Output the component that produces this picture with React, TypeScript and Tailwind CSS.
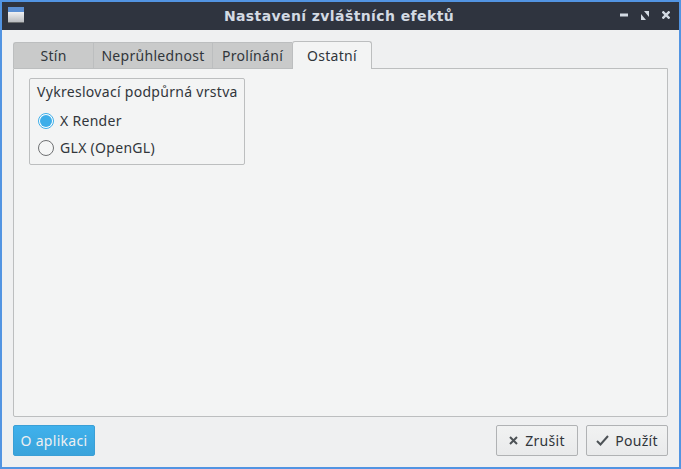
import React from "react";

const tabs = [
  { label: "Stín", width: "w-[80px]" },
  { label: "Neprůhlednost", width: "w-[119px]" },
  { label: "Prolínání", width: "w-[80px]" },
];

function WindowIcon() {
  return (
    <svg width="16" height="16" viewBox="0 0 16 16" className="-mt-[2px]">
      <defs>
        <linearGradient id="body" x1="0" y1="0" x2="0" y2="1">
          <stop offset="0" stopColor="#f0f1f3" />
          <stop offset="1" stopColor="#b9bcc0" />
        </linearGradient>
      </defs>
      <rect x="0" y="0" width="16" height="5" fill="#5b8fd3" />
      <rect x="0" y="5" width="16" height="10" fill="url(#body)" />
      <rect x="0" y="15" width="16" height="1" fill="#6b6e70" />
    </svg>
  );
}

function Radio({ checked, label }: { checked?: boolean; label: string }) {
  return (
    <div className="flex items-center h-[27px] pl-px">
      {checked ? (
        <span className="w-4 h-4 rounded-full border border-[#3daee9] bg-white flex items-center justify-center">
          <span className="w-3 h-3 rounded-full bg-[#3daee9]" />
        </span>
      ) : (
        <span className="w-4 h-4 rounded-full border border-[#6f7173] bg-[#f5f6f6]" />
      )}
      <span className="ml-[6px]">{label}</span>
    </div>
  );
}

export default function App() {
  return (
    <div className="w-[681px] h-[469px] border-2 border-[#5294e2] bg-[#eff0f1] flex flex-col overflow-hidden font-['Noto_Sans',sans-serif] text-[14px] tracking-[0.3px] text-[#31363b]">
      <div className="h-[28px] shrink-0 bg-[#2f343f] grid grid-cols-[1fr_auto_1fr] items-center pl-[6px] pr-[9px]">
        <WindowIcon />
        <div className="text-center font-['DejaVu_Sans',sans-serif] font-bold text-[14px] tracking-[0.4px] text-[#d3dae3]">
          Nastavení zvláštních efektů
        </div>
        <div className="flex items-center justify-end gap-[13px] -mt-[2px]">
          <svg width="8" height="8" viewBox="0 0 8 8">
            <rect x="0" y="2.5" width="8" height="3" fill="#d3dae3" />
          </svg>
          <svg width="8" height="9" viewBox="0 0 8 9">
            <path d="M3 0h5v6zM0 3l5 6H0z" fill="#d3dae3" />
          </svg>
          <svg width="8" height="8" viewBox="0 0 8 8">
            <path d="M.5.5l7 7M7.5.5l-7 7" stroke="#d3dae3" strokeWidth="2.4" />
          </svg>
        </div>
      </div>

      <div className="flex-1 flex flex-col pt-[11px] px-[11px] pb-[11px]">
        <div className="flex h-[28px] shrink-0 relative z-10">
          {tabs.map((t, i) => (
            <div
              key={t.label}
              className={`${t.width} mt-px h-[26px] bg-[#c9caca] border-t border-l border-[#bcbebf] flex items-center justify-center ${i === 0 ? "rounded-tl-[3px]" : ""}`}
            >
              {t.label}
            </div>
          ))}
          <div className="w-[80px] h-[28px] bg-[#f3f4f4] border border-b-0 border-[#bcbebf] rounded-t-[3px] flex items-center justify-center">
            Ostatní
          </div>
        </div>

        <div className="h-[349px] -mt-px shrink-0 bg-[#f3f4f4] border border-[#bcbebf] rounded-b-[2px] pt-[9px] pl-[15px]">
          <div className="w-[216px] h-[87px] border border-[#bcbebf] rounded-[2px] pl-[7px] pt-[2px]">
            <div className="h-[26px] leading-[21px]">Vykreslovací podpůrná vrstva</div>
            <Radio checked label="X Render" />
            <Radio label="GLX (OpenGL)" />
          </div>
        </div>

        <div className="flex justify-between mt-[8px]">
          <button className="w-[82px] h-[31px] rounded-[2px] bg-linear-to-b from-[#3fb1ec] to-[#3aa3db] border border-[#3a9fd6] text-[#eff0f1]">
            O aplikaci
          </button>
          <div className="flex gap-[8px]">
            <button className="w-[82px] h-[31px] rounded-[2px] bg-linear-to-b from-[#f1f2f2] to-[#e9eaeb] border border-[#b0b2b4] flex items-center justify-center gap-[7px]">
              <svg width="9" height="9" viewBox="0 0 9 9">
                <path d="M1 1l7 7M8 1L1 8" stroke="#4d5256" strokeWidth="2" />
              </svg>
              Zrušit
            </button>
            <button className="w-[82px] h-[31px] rounded-[2px] bg-linear-to-b from-[#f1f2f2] to-[#e9eaeb] border border-[#b0b2b4] flex items-center justify-center gap-[6px]">
              <svg width="13" height="11" viewBox="0 0 13 11">
                <path d="M1 6l3.5 3.5L12 1" stroke="#4d5256" strokeWidth="2" fill="none" />
              </svg>
              Použít
            </button>
          </div>
        </div>
      </div>
    </div>
  );
}
